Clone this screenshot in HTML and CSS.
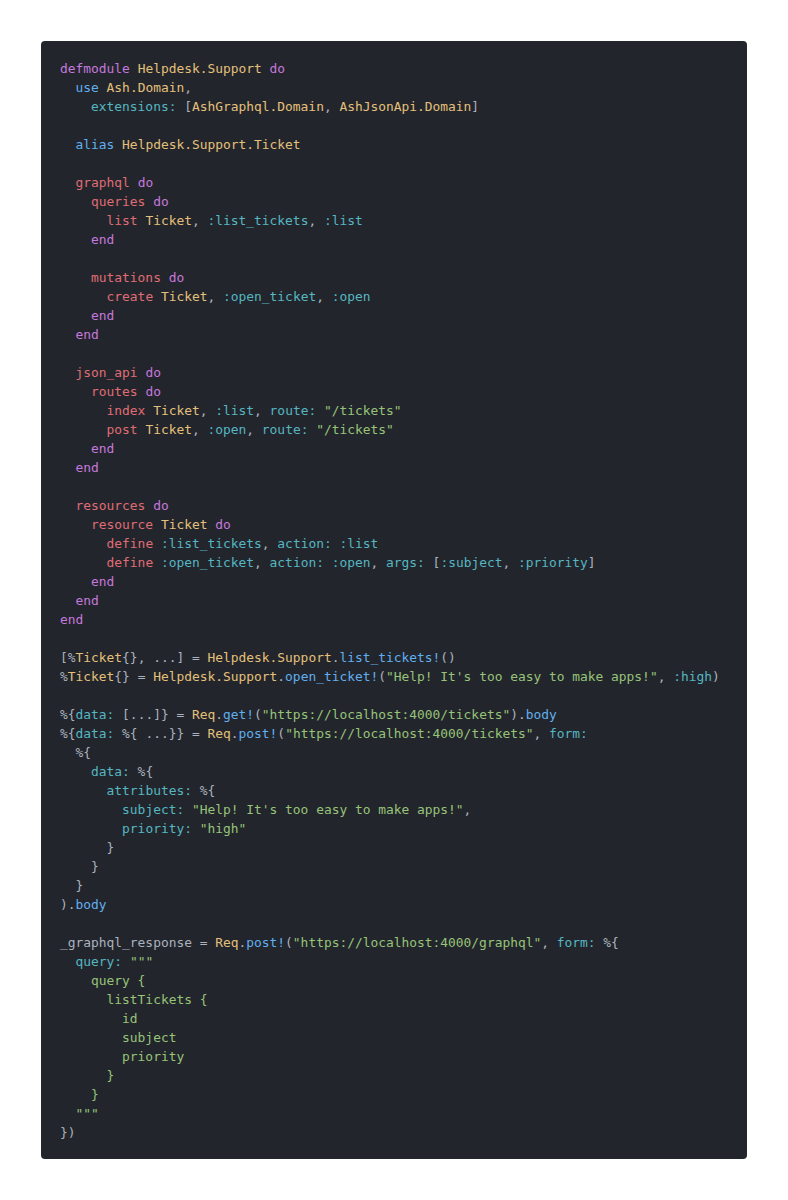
FILE: index.html
```html
<!DOCTYPE html>
<html lang="en">
<head>
<meta charset="utf-8">
<title>Helpdesk.Support</title>
<link rel="stylesheet" href="styles.css">
</head>
<body>
<div class="code-card">
<pre class="code"><span class="k">defmodule</span> <span class="t">Helpdesk.Support</span> <span class="k">do</span>
  <span class="b">use</span> <span class="t">Ash.Domain</span>,
    <span class="c">extensions:</span> [<span class="t">AshGraphql.Domain</span>, <span class="t">AshJsonApi.Domain</span>]

  <span class="b">alias</span> <span class="t">Helpdesk.Support.Ticket</span>

  <span class="r">graphql</span> <span class="k">do</span>
    <span class="r">queries</span> <span class="k">do</span>
      <span class="r">list</span> <span class="t">Ticket</span>, <span class="c">:list_tickets</span>, <span class="c">:list</span>
    <span class="k">end</span>

    <span class="r">mutations</span> <span class="k">do</span>
      <span class="r">create</span> <span class="t">Ticket</span>, <span class="c">:open_ticket</span>, <span class="c">:open</span>
    <span class="k">end</span>
  <span class="k">end</span>

  <span class="r">json_api</span> <span class="k">do</span>
    <span class="r">routes</span> <span class="k">do</span>
      <span class="r">index</span> <span class="t">Ticket</span>, <span class="c">:list</span>, <span class="c">route:</span> <span class="g">"/tickets"</span>
      <span class="r">post</span> <span class="t">Ticket</span>, <span class="c">:open</span>, <span class="c">route:</span> <span class="g">"/tickets"</span>
    <span class="k">end</span>
  <span class="k">end</span>

  <span class="r">resources</span> <span class="k">do</span>
    <span class="r">resource</span> <span class="t">Ticket</span> <span class="k">do</span>
      <span class="r">define</span> <span class="c">:list_tickets</span>, <span class="c">action:</span> <span class="c">:list</span>
      <span class="r">define</span> <span class="c">:open_ticket</span>, <span class="c">action:</span> <span class="c">:open</span>, <span class="c">args:</span> [<span class="c">:subject</span>, <span class="c">:priority</span>]
    <span class="k">end</span>
  <span class="k">end</span>
<span class="k">end</span>

[%<span class="t">Ticket</span>{}, ...] = <span class="t">Helpdesk.Support</span>.<span class="b">list_tickets!</span>()
%<span class="t">Ticket</span>{} = <span class="t">Helpdesk.Support</span>.<span class="b">open_ticket!</span>(<span class="g">"Help! It's too easy to make apps!"</span>, <span class="c">:high</span>)

%{<span class="c">data:</span> [...]} = <span class="t">Req</span>.<span class="b">get!</span>(<span class="g">"https://localhost:4000/tickets"</span>).<span class="b">body</span>
%{<span class="c">data:</span> %{ ...}} = <span class="t">Req</span>.<span class="b">post!</span>(<span class="g">"https://localhost:4000/tickets"</span>, <span class="c">form:</span>
  %{
    <span class="c">data:</span> %{
      <span class="c">attributes:</span> %{
        <span class="c">subject:</span> <span class="g">"Help! It's too easy to make apps!"</span>,
        <span class="c">priority:</span> <span class="g">"high"</span>
      }
    }
  }
).<span class="b">body</span>

_graphql_response = <span class="t">Req</span>.<span class="b">post!</span>(<span class="g">"https://localhost:4000/graphql"</span>, <span class="c">form:</span> %{
  <span class="c">query:</span> <span class="g">"""
    query {
      listTickets {
        id
        subject
        priority
      }
    }
  """</span>
})</pre>
</div>
</body>
</html>
```

FILE: styles.css
```css
html, body {
  margin: 0;
  padding: 0;
  background: #ffffff;
}

body {
  padding: 41px;
}

.code-card {
  background: #22262c;
  border-radius: 4px;
  padding: 18px 19px 17px;
}

.code {
  margin: 0;
  font-family: "DejaVu Sans Mono", "Liberation Mono", monospace;
  font-size: 12.9px;
  line-height: 19px;
  color: #abb2bf;
  white-space: pre;
}

.k { color: #c678dd; }
.t { color: #e5c07b; }
.b { color: #61afef; }
.c { color: #56b6c2; }
.r { color: #e06c75; }
.g { color: #98c379; }
```
